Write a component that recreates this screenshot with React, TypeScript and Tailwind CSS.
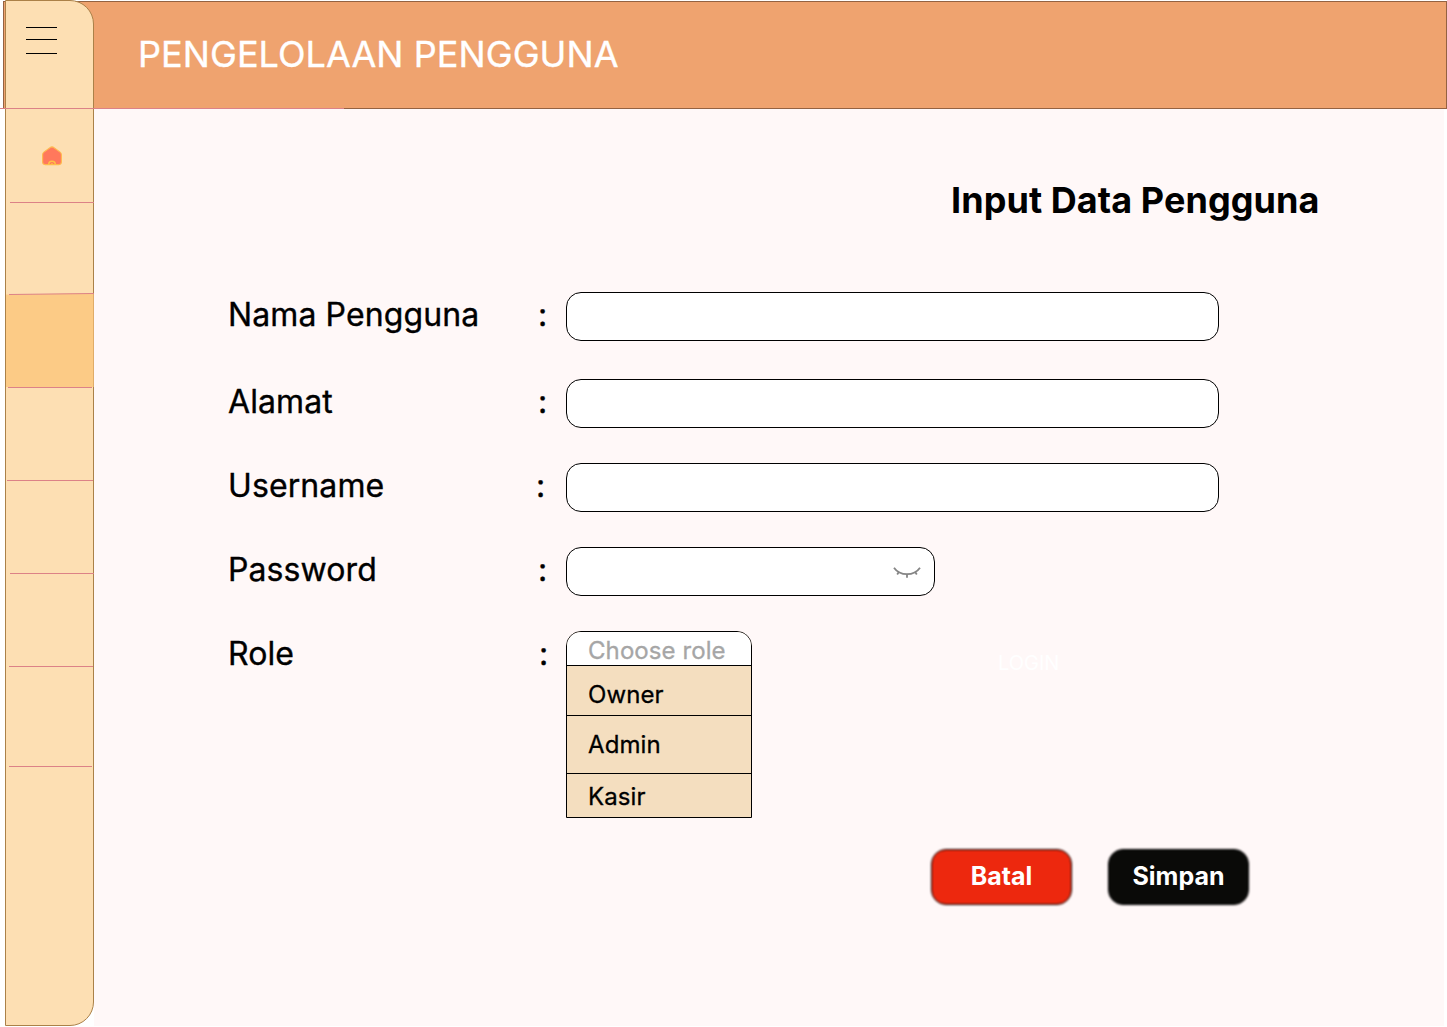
const rows = [
  { label: "Nama Pengguna", row: "mb-[38px]", labelWidth: "w-[310px]", colonWidth: "w-[28px]" },
  { label: "Alamat", row: "mb-[35px]", labelWidth: "w-[310px]", colonWidth: "w-[28px]" },
  { label: "Username", row: "mb-[35px]", labelWidth: "w-[308px]", colonWidth: "w-[30px]" },
];

const labelText =
  "shrink-0 text-[32px] leading-[45px] tracking-[0.1px] whitespace-pre text-black [-webkit-text-stroke:0.35px_currentColor]";

function Separator({ className }: { className: string }) {
  return <div className={`h-px shrink-0 bg-[#dc8287] ${className}`} />;
}

function Sidebar() {
  return (
    <aside className="z-10 col-start-2 col-end-3 row-start-1 row-end-4 flex h-[1026px] w-[89px] flex-col rounded-r-[24px] border border-[#ab8148] bg-[#fddfb3]">
      <div className="h-[107px] shrink-0 pt-[26px] pl-[20px]">
        <div className="flex w-[31px] flex-col">
          <span className="h-px bg-black" />
          <span className="mt-[11px] h-px bg-black" />
          <span className="mt-[13px] h-px bg-black" />
        </div>
      </div>
      <Separator className="-ml-[6px] w-[344px]" />
      <div className="h-[93px] shrink-0 pt-[36px] pl-[35px]">
        <svg width="22" height="22" viewBox="0 0 22 22" fill="none">
          <path
            d="M11 1.900c.6 0 1.200.2 1.700.6l6.100 4.400c1.100.8 1.600 1.700 1.600 2.900v7.300c0 1.700-.8 2.500-2.500 2.500H4.100c-1.700 0-2.500-.8-2.500-2.500V9.800c0-1.200.5-2.100 1.600-2.900l6.100-4.400c.5-.4 1.100-.6 1.700-.6z"
            fill="#ff785c"
            stroke="#ffb84d"
            strokeWidth="1.100"
          />
          <path d="M7.700 19.600a3.300 3.300 0 0 1 6.600 0" stroke="#ffc145" strokeWidth="1.500" />
          <circle cx="11" cy="19" r="0.9" fill="#ffc145" />
        </svg>
      </div>
      <Separator className="ml-[4px] w-[84px]" />
      <div className="h-[90px] shrink-0" />
      <div className="h-[94px] w-[88px] shrink-0 border-r border-[#e0ac68] bg-[#fccb86]">
        <svg width="88" height="3" viewBox="0 0 88 3" className="block">
          <path d="M0 0H88V.3L3 1.500H0Z" fill="#fddfb3" />
          <path d="M3 1.500L88 .5" stroke="#dc8287" strokeWidth="1" />
        </svg>
      </div>
      <Separator className="ml-[2px] w-[84px]" />
      <div className="h-[92px] shrink-0" />
      <Separator className="ml-px w-[86px]" />
      <div className="h-[92px] shrink-0" />
      <Separator className="ml-[4px] w-[84px]" />
      <div className="h-[92px] shrink-0" />
      <Separator className="ml-[3px] w-[84px]" />
      <div className="h-[99px] shrink-0" />
      <Separator className="ml-[3px] w-[83px]" />
    </aside>
  );
}

export default function App() {
  return (
    <div className="grid h-[1027px] w-[1447px] grid-cols-[5px_89px_1350px_3px] grid-rows-[109px_917px_1px] overflow-hidden bg-white font-['Inter',sans-serif]">
      <header className="col-start-1 col-end-5 row-start-1 row-end-2 mt-px ml-[3px] flex h-[108px] items-center border border-[#946242] bg-[#efa36f] pb-[2px] pl-[134px]">
        <h1 className="text-[36px] leading-[44px] tracking-[0.07px] whitespace-nowrap text-white [-webkit-text-stroke:0.35px_currentColor]">PENGELOLAAN PENGGUNA</h1>
      </header>
      <Sidebar />
      <main className="col-start-3 col-end-4 row-start-2 row-end-3 bg-[#fff8f8] pt-[69px]">
        <h2 className="ml-[857px] text-[36px] leading-[44px] font-bold tracking-[0.07px] whitespace-nowrap text-black">Input Data Pengguna</h2>
        <form className="mt-[70px] ml-[134px]">
          {rows.map((r) => (
            <div key={r.label} className={`flex h-[49px] ${r.row}`}>
              <label className={`${labelText} ${r.labelWidth}`}>{r.label}</label>
              <span className={`${labelText} ${r.colonWidth}`}>:</span>
              <input className="h-[49px] w-[653px] shrink-0 rounded-[15px] border border-black bg-white" />
            </div>
          ))}
          <div className="mb-[35px] flex h-[49px]">
            <label className={`${labelText} w-[310px]`}>Password</label>
            <span className={`${labelText} w-[28px]`}>:</span>
            <div className="flex h-[49px] w-[369px] items-start justify-end rounded-[15px] border border-black bg-white pt-[18px] pr-[13.500px]">
              <svg width="28" height="14" viewBox="0 0 28 14" fill="none" stroke="#858585" strokeWidth="1.800">
                <path d="M1 1.700C4 6 9 8.200 14 8.200S24 6 27 1.700" />
                <path d="M14 8.200v3.500M6 5.800L4.200 8.500M22 5.800L23.800 8.500" />
              </svg>
            </div>
          </div>
          <div className="flex h-[187px]">
            <label className={`${labelText} w-[311px]`}>Role</label>
            <span className={`${labelText} w-[27px]`}>:</span>
            <div className="flex w-[186px] shrink-0 flex-col overflow-hidden rounded-t-[15px] border border-black bg-[#f4debf] text-[24px] tracking-[0.08px] text-black [-webkit-text-stroke:0.3px_currentColor]">
              <div className="h-[34px] border-b border-black bg-white pl-[21px] leading-[38px] text-[#a6a6a6]">Choose role</div>
              <div className="h-[50px] border-b border-black pl-[21px] leading-[58px]">Owner</div>
              <div className="h-[58px] border-b border-black pl-[21px] leading-[58px]">Admin</div>
              <div className="h-[43px] pl-[21px] leading-[46px]">Kasir</div>
            </div>
            <span className="mt-[20px] ml-[246px] text-[20px] leading-[24px] text-white">LOGIN</span>
          </div>
        </form>
        <div className="mt-[31px] ml-[837px] flex gap-[36px] text-[25px] font-bold text-white">
          <button className="relative isolate h-[56px] w-[141px] pb-[2px] leading-[54px]">
            <span className="absolute inset-0 -z-10 rounded-[15px] border border-black bg-[#ed280e] blur-[1px]" />
            Batal
          </button>
          <button className="relative isolate h-[56px] w-[141px] pb-[2px] leading-[54px]">
            <span className="absolute inset-0 -z-10 rounded-[15px] border border-black bg-[#0a0a08] blur-[1px]" />
            Simpan
          </button>
        </div>
      </main>
    </div>
  );
}
